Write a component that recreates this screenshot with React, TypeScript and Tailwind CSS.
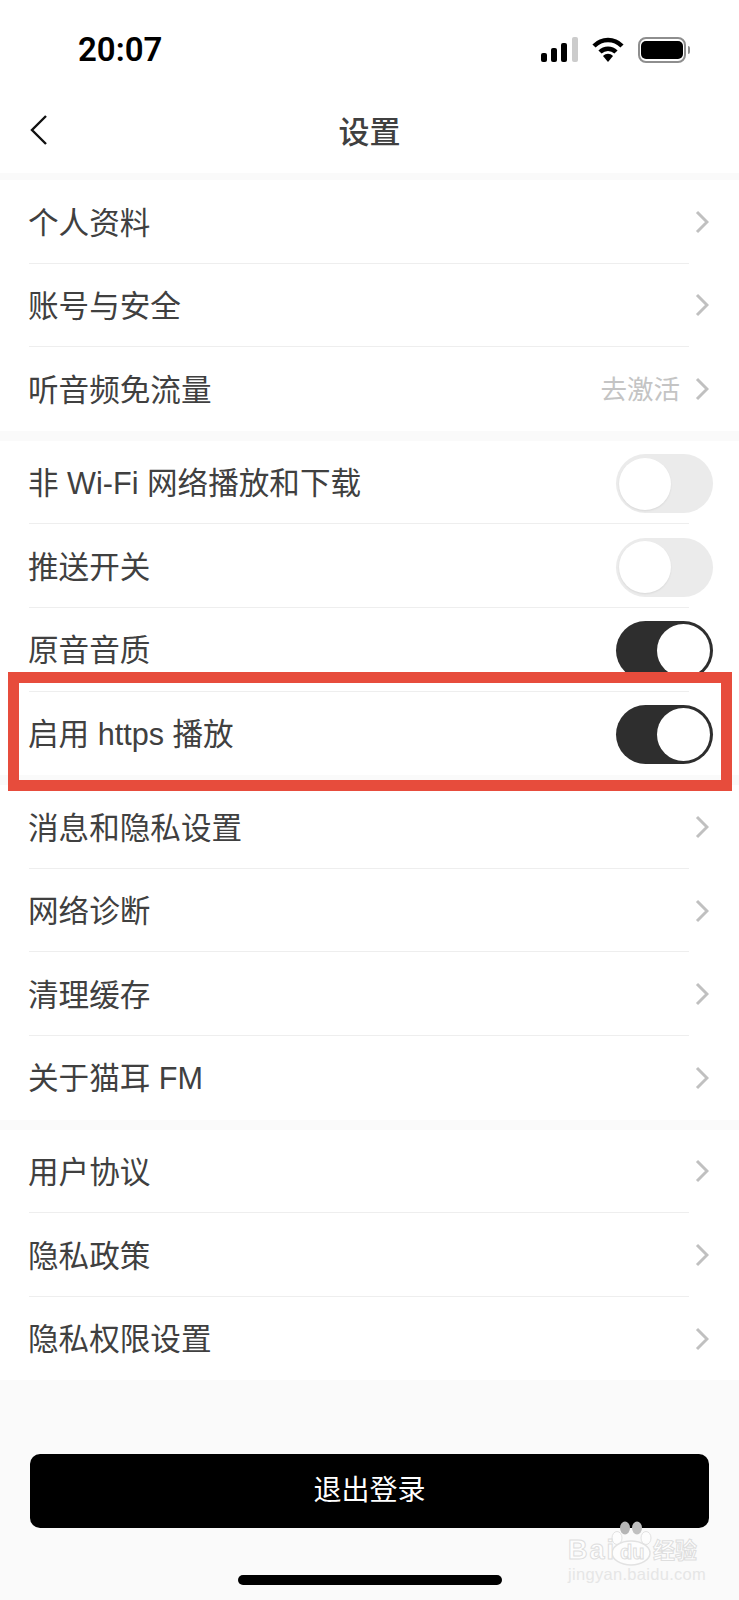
type Row = { label: string; value?: string; toggle?: "on" | "off" };

const groups: Row[][] = [
  [
    { label: "个人资料" },
    { label: "账号与安全" },
    { label: "听音频免流量", value: "去激活" },
  ],
  [
    { label: "非 Wi-Fi 网络播放和下载", toggle: "off" },
    { label: "推送开关", toggle: "off" },
    { label: "原音音质", toggle: "on" },
    { label: "启用 https 播放", toggle: "on" },
  ],
  [
    { label: "消息和隐私设置" },
    { label: "网络诊断" },
    { label: "清理缓存" },
    { label: "关于猫耳 FM" },
  ],
  [
    { label: "用户协议" },
    { label: "隐私政策" },
    { label: "隐私权限设置" },
  ],
];

function Toggle({ on }: { on: boolean }) {
  if (on) {
    return (
      <div className="mt-[2px] flex h-[59px] w-[97px] items-center justify-end rounded-full bg-[#2e2e2e] pr-[3px]">
        <div className="h-[53px] w-[53px] rounded-full bg-white" />
      </div>
    );
  }
  return (
    <div className="mt-[2px] flex h-[59px] w-[97px] items-center rounded-full bg-[#ebebeb] pl-[3px]">
      <div className="h-[52px] w-[52px] rounded-full bg-white shadow-[0_1px_2px_rgba(0,0,0,0.08)]" />
    </div>
  );
}

function SettingRow({ row, last }: { row: Row; last: boolean }) {
  return (
    <div className="relative flex h-[83.6px] items-center pl-[28px] pr-[26px]">
      <span className="flex-1 pt-[2px] text-[30.6px] leading-none text-[#404040]">{row.label}</span>
      {row.value && <span className="mr-[15px] pt-[2px] text-[26.500px] leading-none text-[#c4c4c4]">{row.value}</span>}
      {row.toggle ? (
        <Toggle on={row.toggle === "on"} />
      ) : (
        <svg className="mr-[4px] h-[24px] w-[14px]" viewBox="0 0 14 24" fill="none">
          <path d="M2 2l10 10L2 22" stroke="#c0c0c0" strokeWidth="3" />
        </svg>
      )}
      {!last && <div className="absolute bottom-0 left-[29px] h-px w-[660px] bg-[#eeeeee]" />}
    </div>
  );
}

function Watermark() {
  const letters = "text-[#fdfdfd] font-bold [-webkit-text-stroke:1px_#dedede]";
  return (
    <div className="absolute left-[566px] top-[1520px] h-[64px] w-[136px]">
      <svg className="absolute left-[38px] top-0" width="60" height="48" viewBox="0 0 60 48">
        <ellipse cx="21" cy="8" rx="5" ry="6.500" fill="#b5b5b5" />
        <ellipse cx="33" cy="8" rx="5" ry="6.500" fill="#c0c0c0" />
        <ellipse cx="13" cy="18" rx="5" ry="6.500" fill="#fdfdfd" stroke="#e2e2e2" />
        <ellipse cx="42" cy="18" rx="5" ry="6.500" fill="#fdfdfd" stroke="#e2e2e2" />
        <ellipse cx="27" cy="33" rx="19" ry="12" fill="#fdfdfd" stroke="#e2e2e2" strokeWidth="1.500" />
      </svg>
      <span className={`absolute left-[2px] top-[17px] text-[27px] leading-none tracking-[2px] ${letters}`}>Bai</span>
      <span className={`absolute left-[54px] top-[22px] text-[20px] leading-none ${letters}`}>du</span>
      <span className={`absolute left-[87px] top-[20px] text-[22px] leading-none ${letters}`}>经验</span>
      <span className="absolute left-[2px] top-[46px] text-[16.500px] leading-none tracking-[0.3px] text-[#e6e6e6]">jingyan.baidu.com</span>
    </div>
  );
}

export default function App() {
  return (
    <div
      className="relative h-[1600px] w-[739px] overflow-hidden bg-[#fafafa]"
      style={{ fontFamily: '"Liberation Sans", "Noto Sans CJK SC", sans-serif' }}
    >
      {/* status bar + nav */}
      <div className="h-[173px] bg-white">
        <div className="flex h-[99px] items-center justify-between pl-[78px] pr-[49px]">
          <span className="text-[33px] font-semibold leading-none text-black" style={{ fontFamily: "Roboto, sans-serif" }}>20:07</span>
          <div className="flex items-center gap-[14px]">
            <svg width="37" height="25" viewBox="0 0 37 25">
              <rect x="0" y="16" width="6" height="9" rx="2" fill="#000" />
              <rect x="10" y="11" width="6" height="14" rx="2" fill="#000" />
              <rect x="20" y="6" width="6" height="19" rx="2" fill="#000" />
              <rect x="31" y="0" width="6" height="25" rx="2" fill="#cccccc" />
            </svg>
            <svg width="32" height="25" viewBox="0 0 32 25" fill="none">
              <path d="M2 9c8-8 20-8 28 0" stroke="#000" strokeWidth="4.500" />
              <path d="M8 15c4.500-4.500 11.500-4.500 16 0" stroke="#000" strokeWidth="4.500" />
              <path d="M11 19c3-3 7-3 10 0l-5 6z" fill="#000" />
            </svg>
            <div className="flex items-center gap-[2px]">
              <div className="flex h-[26px] w-[48px] items-center justify-center rounded-[8px] border-2 border-[#8e8e8e]">
                <div className="h-[18px] w-[42px] rounded-[5px] bg-black" />
              </div>
              <div className="h-[8px] w-[2px] rounded-r-full bg-[#8e8e8e]" />
            </div>
          </div>
        </div>
        <div className="relative flex h-[62px] items-center justify-center">
          <svg className="absolute left-[30px] top-[15px] h-[32px] w-[18px]" viewBox="0 0 18 32" fill="none">
            <path d="M16 2L2 16l14 14" stroke="#111" strokeWidth="2.400" />
          </svg>
          <span className="pt-[4px] text-[31px] font-medium leading-none text-[#404040]">设置</span>
        </div>
      </div>

      <div className="mt-[7px]">
        {groups.map((group, i) => (
          <div key={i} className="mb-[10px] bg-white">
            {group.map((row, j) => (
              <SettingRow key={row.label} row={row} last={j === group.length - 1} />
            ))}
          </div>
        ))}
      </div>

      <div className="mx-[30px] mt-[74px] flex h-[74px] items-center justify-center rounded-[10px] bg-black text-[28px] text-white">
        退出登录
      </div>

      <div className="mx-auto mt-[47px] h-[10px] w-[264px] rounded-full bg-black" />

      {/* red annotation */}
      <div className="absolute left-[8px] top-[672px] h-[119px] w-[724px] border-[11px] border-[#e74c3c]" />

      <Watermark />
    </div>
  );
}
